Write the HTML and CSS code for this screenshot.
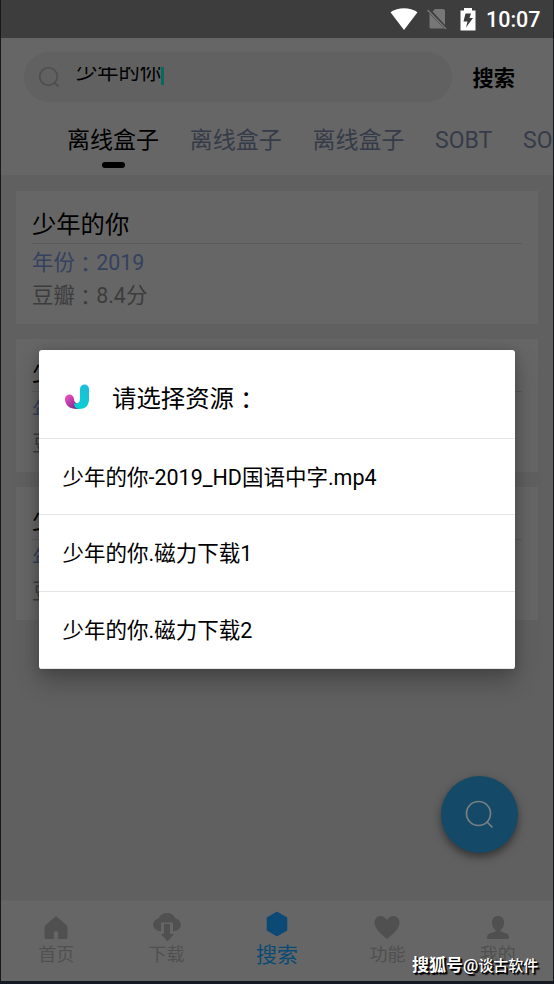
FILE: index.html
```html
<!DOCTYPE html>
<html lang="zh-CN">
<head>
<meta charset="utf-8">
<title>搜索</title>
<link rel="stylesheet" href="styles.css">
</head>
<body>
<div class="screen">
  <header class="status">
    <svg class="wifi" width="28" height="23" viewBox="0 0 28 23"><path d="M14 22 .5 4.200C8-1.100 20-1.100 27.500 4.200Z" fill="#fff"/></svg>
    <svg class="sim" width="20" height="22" viewBox="0 0 20 22"><path d="M5.500 3.500 8 1H16q2 0 2 2V17ZM2.500 5.500 17 20.500H4q-1.500 0-1.500-1.500Z" fill="#777"/><path d="M.5 2 19 21" stroke="#777" stroke-width="1.500"/></svg>
    <svg class="battery" width="16" height="23" viewBox="0 0 16 23"><path d="M4 0h8v2.500h3.500V22.500H.5V2.500H4Z" fill="#fff"/><path d="M5.500 5.500H11L9.500 10H13L6 19.500 7.500 13.500H3.500Z" fill="#3d3d3d"/></svg>
    <span class="clock">10:07</span>
  </header>
  <section class="top">
    <div class="search-row">
      <div class="search-box">
        <svg width="22" height="22" viewBox="0 0 22 22" fill="none" stroke="#4f4f4f" stroke-width="1.800"><circle cx="10.500" cy="10.500" r="8.800"/><path d="m16.500 16.500 4 4"/></svg>
        <div class="query"><span>少年的你</span><i class="caret"></i></div>
      </div>
      <span class="search-button">搜索</span>
    </div>
    <nav class="tabs">
      <span class="tab selected">离线盒子</span><span class="tab">离线盒子</span><span class="tab">离线盒子</span><span class="tab">SOBT</span><span class="tab">SOBT</span>
    </nav>
  </section>
  <main class="results">
    <article class="card"><h2>少年的你</h2><p class="year">年份<b lang="zh-TW">：</b>2019</p><p>豆瓣<b lang="zh-TW">：</b>8.4分</p></article>
    <article class="card"><h2>少年的你</h2><p class="year">年份<b lang="zh-TW">：</b>2019</p><p>豆瓣<b lang="zh-TW">：</b>8.4分</p></article>
    <article class="card"><h2>少年的你</h2><p class="year">年份<b lang="zh-TW">：</b>2019</p><p>豆瓣<b lang="zh-TW">：</b>8.4分</p></article>
  </main>
  <footer class="bottom">
    <div class="item"><svg width="28" height="28" viewBox="0 0 28 28"><path d="M14 3 25.500 13v11.500q0 1.500-1.500 1.500h-8v-6q0-2-2-2t-2 2v6H4q-1.500 0-1.500-1.500V13Z"/></svg><span>首页</span></div>
    <div class="item download"><svg width="30" height="30" viewBox="0 0 30 30"><path d="M7 19a6.300 6.300 0 0 1-.5-12.500Q9 1 15 1t8.500 5.500A6.300 6.300 0 0 1 23 19h-2V10.500H9V19Z"/><path d="M12 12h6v10h4l-6.500 7.500L9 22h3Z"/></svg><span>下载</span></div>
    <div class="item current"><svg width="24" height="26" viewBox="0 0 24 26"><path d="M12 1.500 21.500 7v12L12 24.500 2.500 19V7Z" stroke="#0a4a75" stroke-width="1.500" stroke-linejoin="round"/></svg><span>搜索</span></div>
    <div class="item"><svg width="28" height="28" viewBox="0 0 28 28"><path d="M14 26Q1.500 16.500 1.500 10C1.500 2.500 10 .5 14 7c4-6.500 12.500-4.500 12.500 3Q26.500 16.500 14 26Z"/></svg><span>功能</span></div>
    <div class="item"><svg width="28" height="28" viewBox="0 0 28 28"><path d="M14 3c4 0 6 2.500 6 6.500 0 4-1.500 6-3.500 7.500v1.500l6 2q2.500 1 2.500 3.500v2H3v-2q0-2.500 2.500-3.500l6-2V17C9.500 15.500 8 13.500 8 9.500 8 5.500 10 3 14 3Z"/></svg><span>我的</span></div>
  </footer>
  <div class="fab"><svg width="30" height="30" viewBox="0 0 30 30" fill="none" stroke="#7a7f83" stroke-width="1.700"><circle cx="13.500" cy="13.500" r="12"/><path d="m22 22 5.500 5.500"/></svg></div>
  <div class="dialog">
    <div class="dialog-head">
      <svg width="26" height="26" viewBox="0 0 26 26" fill="none" stroke-width="8.500" stroke-linecap="round"><defs><linearGradient id="pink" x1="0" y1="0" x2="1" y2="1"><stop stop-color="#ff54c4"/><stop offset=".55" stop-color="#a9369f"/><stop offset="1" stop-color="#42318f"/></linearGradient><linearGradient id="cyan" x1="1" y1="0" x2="0" y2="1"><stop stop-color="#23b9dc"/><stop offset="1" stop-color="#00d7cf"/></linearGradient></defs><path d="M1 15c0-6 8.500-6 9 0 0 2.500 1.500 4 3.500 4.500L16 25h-3C5 25 1 21 1 15Z" fill="url(#pink)"/><path d="M16 5c0-6 9-6 9 0v10c0 7-4 10-10 10-3 0-4.500-2.500-5-5.500 3 .5 6-.5 6-5Z" fill="url(#cyan)"/></svg>
      <span>请选择资源<b lang="zh-TW">：</b></span>
    </div>
    <div class="option">少年的你-2019_HD国语中字.mp4</div>
    <div class="option">少年的你.磁力下载1</div>
    <div class="option">少年的你.磁力下载2</div>
  </div>
  <div class="watermark">搜狐号@<small>谈古软件</small></div>
</div>
</body>
</html>
```
FILE: styles.css
```css
* { box-sizing: border-box; }
body {
  margin: 0;
  background: #141922;
  font-family: Roboto, "Noto Sans CJK SC", sans-serif;
  color: #000;
}
b { position: relative; top: 2px; font-family: "Noto Sans CJK TC", sans-serif; font-weight: 400; line-height: 0; }
svg { display: block; flex: none; }
.screen {
  position: relative;
  display: flex;
  flex-direction: column;
  width: 554px;
  height: 984px;
  padding: 0 1px 3px;
  overflow: hidden;
}
.status {
  display: flex;
  align-items: center;
  justify-content: flex-end;
  height: 38px;
  padding-right: 12.500px;
  background: #3d3d3d;
  color: #fff;
}
.sim { margin-left: 9px; }
.battery { margin-left: 13px; }
.clock { margin-left: 10px; font-size: 21.500px; font-weight: 500; line-height: 38px; padding-top: 2px; }
.top { height: 137px; padding-top: 14px; background: #666; }
.search-row { display: flex; align-items: center; }
.search-box {
  display: flex;
  align-items: center;
  width: 428px;
  height: 50px;
  margin-left: 22.500px;
  padding-left: 14px;
  border-radius: 25px;
  background: #616161;
}
.query {
  display: flex;
  align-items: flex-start;
  width: 120px;
  height: 18px;
  margin-left: 16.500px;
  margin-top: -2px;
  overflow: hidden;
  font-size: 21.300px;
  line-height: 30px;
}
.query span { margin-top: -10px; }
.caret { width: 3px; height: 18px; background: #08695d; }
.search-button { margin-left: 21px; font-size: 21.200px; font-weight: 700; line-height: 30px; padding-top: 3px; }
.tabs { display: flex; gap: 30.700px; margin-left: 66px; overflow: hidden; white-space: nowrap; font-size: 23px; line-height: 34px; margin-top: 21.500px; color: #363b49; }
.tab { flex: none; height: 46px; }
.selected { color: #000; }
.selected::after { content: ""; display: block; width: 23px; height: 6px; margin: 4.500px auto 0; border-radius: 3px; background: #000; }
.results { display: flex; flex: 1; flex-direction: column; gap: 15px; padding: 16px 15px; background: #606060; }
.card { height: 133px; padding: 15px 16px; background: #666; }
.card h2 { height: 38px; margin: 0 0 3px; border-bottom: 1px solid #5a5a5a; font-size: 24.300px; font-weight: 400; line-height: 37px; }
.card p { height: 32.500px; margin: 0; color: #3c3c3c; font-size: 21.400px; line-height: 32px; }
.card .year { color: #35415f; }
.bottom { display: flex; height: 81px; background: #666; border-top: 1px solid #636363; }
.item { display: flex; flex: 1; flex-direction: column; align-items: center; justify-content: flex-end; padding-bottom: 12px; color: #505050; fill: #505050; font-size: 18px; line-height: 28px; }
.item svg { height: 28px; }
.download svg { height: 30px; margin-bottom: -1px; }
.current { color: #0a4a75; fill: #0a4a75; font-size: 21px; }
.current svg { margin-bottom: 3px; }
.fab {
  position: absolute;
  left: 441px;
  top: 776px;
  display: flex;
  align-items: center;
  justify-content: center;
  width: 77px;
  height: 77px;
  border-radius: 50%;
  background: #144a68;
  box-shadow: 0 4px 9px #333;
}
.dialog {
  position: absolute;
  left: 39px;
  top: 350px;
  width: 476px;
  height: 319px;
  overflow: hidden;
  border-radius: 3px;
  background: #fff;
  box-shadow: 0 12px 24px rgba(0, 0, 0, .28), 0 0 10px rgba(0, 0, 0, .14);
}
.dialog-head { display: flex; align-items: center; height: 88.500px; padding: 7px 0 0 25px; border-bottom: 1.500px solid #e6e6e6; font-size: 24.400px; }
.dialog-head span { margin-left: 22px; margin-top: -2px; }
.option { height: 76.700px; padding-left: 23.500px; border-bottom: 1.500px solid #e6e6e6; font-size: 21.500px; line-height: 78px; }
.watermark { position: absolute; left: 412px; top: 953px; color: #fff; font-size: 17px; font-weight: 600; line-height: 24px; white-space: nowrap; text-shadow: 1px 1px 1px #000, 2px 2px 1px #000; }
.watermark small { font-size: 15px; font-weight: 500; }
```
